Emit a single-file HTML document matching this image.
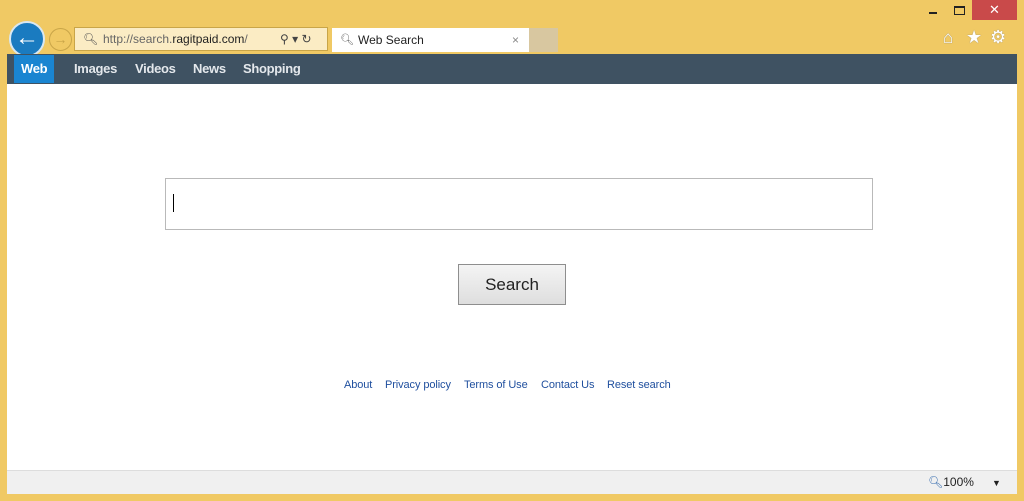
<!DOCTYPE html>
<html><head><style>
*{margin:0;padding:0;box-sizing:border-box}
body{width:1024px;height:501px;background:#f0c964;position:relative;overflow:hidden;font-family:"Liberation Sans",sans-serif}
.abs{position:absolute}
</style></head><body>
<div class="abs" style="left:972px;top:0;width:45px;height:20px;background:#c94a4a;color:#fff;text-align:center;font-size:13px;line-height:20px">✕</div>
<div class="abs" style="left:929px;top:12px;width:8px;height:2px;background:#222"></div>
<div class="abs" style="left:954px;top:6px;width:11px;height:9px;border:1px solid #222;border-top-width:2px"></div>
<div class="abs" style="left:943px;top:28px;color:#fff;font-size:17px;line-height:20px;text-shadow:0 0 1px #777">⌂</div>
<div class="abs" style="left:966px;top:27px;color:#fff;font-size:18px;line-height:20px;text-shadow:0 0 1px #777">★</div>
<div class="abs" style="left:990px;top:27px;color:#fff;font-size:18px;line-height:20px;text-shadow:0 0 1px #777">⚙</div>
<div class="abs" style="left:9px;top:21px;width:36px;height:36px;border-radius:50%;background:#1a7bc0;border:2px solid #d9e8f2;color:#fff;font-size:24px;font-weight:bold;text-align:center;line-height:30px">←</div>
<div class="abs" style="left:49px;top:28px;width:23px;height:23px;border-radius:50%;border:1px solid #c9a548;color:#c9a548;text-align:center;font-size:14px;line-height:21px">→</div>
<div class="abs" style="left:74px;top:27px;width:254px;height:24px;background:#fbecc4;border:1px solid #c9a548;font-size:12px;line-height:22px;color:#666;padding-left:28px">http://search.<span style="color:#222">ragitpaid.com</span>/
<span class="abs" style="left:8px;top:0;color:#555">🔍︎</span><span class="abs" style="left:205px;top:0;color:#444">⚲ ▾ ↻</span></div>
<div class="abs" style="left:332px;top:28px;width:197px;height:24px;background:#fff;font-size:12px;line-height:24px;color:#222;padding-left:26px">Web Search<span class="abs" style="left:8px;top:0;color:#666;font-size:11px">🔍︎</span><span class="abs" style="left:180px;top:0;color:#888">×</span></div>
<div class="abs" style="left:529px;top:28px;width:29px;height:24px;background:#d8c7a0"></div>
<div class="abs" style="left:7px;top:54px;width:1010px;height:30px;background:#3f5262"></div>
<div class="abs" style="left:14px;top:55px;width:40px;height:28px;background:#1a85d1"></div>
<div class="abs" style="left:7px;top:55px;height:28px;font-size:13px;font-weight:bold;color:#fff;line-height:28px;white-space:nowrap;letter-spacing:-0.3px">
<span class="abs" style="left:14px">Web</span><span class="abs" style="left:67px;color:#e4e8ec">Images</span><span class="abs" style="left:128px;color:#e4e8ec">Videos</span><span class="abs" style="left:186px;color:#e4e8ec">News</span><span class="abs" style="left:236px;color:#e4e8ec">Shopping</span></div>
<div class="abs" style="left:7px;top:84px;width:1010px;height:386px;background:#fff"></div>
<div class="abs" style="left:165px;top:178px;width:708px;height:52px;border:1px solid #b9b9b9;background:#fff"></div>
<div class="abs" style="left:173px;top:194px;width:1px;height:18px;background:#000"></div>
<div class="abs" style="left:458px;top:264px;width:108px;height:41px;border:1px solid #8e8e8e;background:linear-gradient(#f4f4f4,#dedede);font-size:17px;color:#222;text-align:center;line-height:39px">Search</div>
<div class="abs" style="left:0;top:378px;width:1024px;font-size:11px;color:#1f4f9e;line-height:14px;letter-spacing:-0.1px">
<span class="abs" style="left:344px">About</span><span class="abs" style="left:385px">Privacy policy</span><span class="abs" style="left:464px">Terms of Use</span><span class="abs" style="left:541px">Contact Us</span><span class="abs" style="left:607px">Reset search</span></div>
<div class="abs" style="left:7px;top:470px;width:1010px;height:24px;background:#f0f0f0;border-top:1px solid #ddd"></div>
<div class="abs" style="left:928px;top:474px;font-size:12px;color:#222;line-height:16px"><span style="color:#3a6fb0">🔍︎</span>100%<span style="margin-left:18px;font-size:9px">▼</span></div>
</body></html>
